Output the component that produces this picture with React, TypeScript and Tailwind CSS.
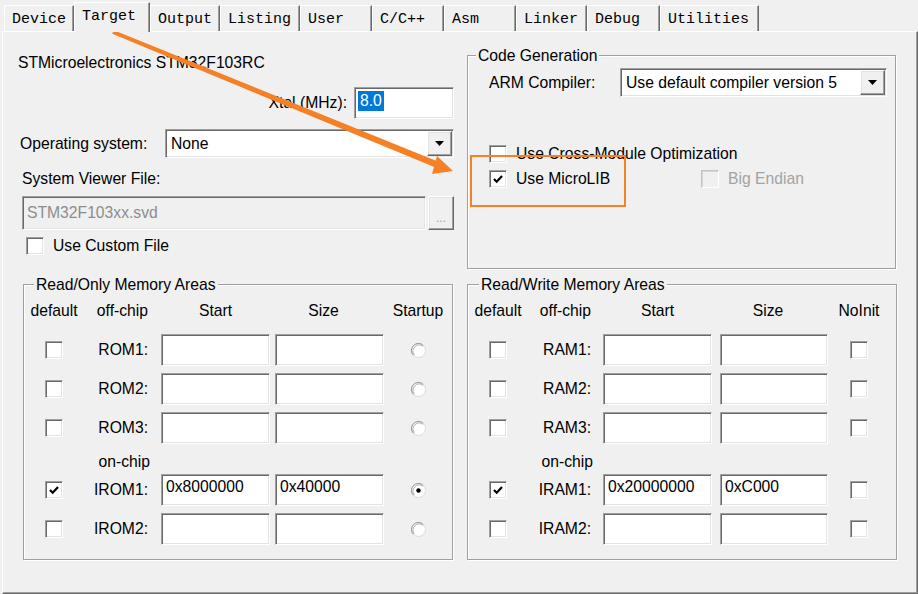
import React from 'react'

// classic win32 3d borders
const sunken =
  'border border-t-[#a0a0a0] border-l-[#a0a0a0] border-b-white border-r-white shadow-[inset_1px_1px_0_#696969,inset_-1px_-1px_0_#e3e3e3]'
const raised =
  'border border-t-white border-l-white border-b-[#696969] border-r-[#696969] shadow-[inset_-1px_-1px_0_#a0a0a0,inset_1px_1px_0_#e3e3e3]'
const etched = 'border border-[#a0a0a0] shadow-[1px_1px_0_#fff,inset_1px_1px_0_#fff]'

const TABS = [
  { label: 'Device', w: 'w-[70px]' },
  { label: 'Target', w: 'w-[76px]', active: true },
  { label: 'Output', w: 'w-[70px]' },
  { label: 'Listing', w: 'w-[80px]' },
  { label: 'User', w: 'w-[72px]' },
  { label: 'C/C++', w: 'w-[72px]' },
  { label: 'Asm', w: 'w-[72px]' },
  { label: 'Linker', w: 'w-[71px]' },
  { label: 'Debug', w: 'w-[73px]' },
  { label: 'Utilities', w: 'w-[99px]' },
]

type Row = { label?: string; checked?: boolean; start?: string; size?: string; on?: boolean; onchip?: boolean }

const RO_ROWS: Row[] = [
  { label: 'ROM1:' },
  { label: 'ROM2:' },
  { label: 'ROM3:' },
  { onchip: true },
  { label: 'IROM1:', checked: true, start: '0x8000000', size: '0x40000', on: true },
  { label: 'IROM2:' },
]

const RW_ROWS: Row[] = [
  { label: 'RAM1:' },
  { label: 'RAM2:' },
  { label: 'RAM3:' },
  { onchip: true },
  { label: 'IRAM1:', checked: true, start: '0x20000000', size: '0xC000' },
  { label: 'IRAM2:' },
]

function CheckBox({ checked = false, disabled = false }: { checked?: boolean; disabled?: boolean }) {
  return (
    <span
      className={`flex h-[18px] w-[18px] shrink-0 items-center justify-center border ${
        disabled
          ? 'border-t-[#c4c4c4] border-l-[#c4c4c4] border-b-white border-r-white bg-[#f0f0f0] shadow-[inset_1px_1px_0_#d6d6d6]'
          : 'border-t-[#a0a0a0] border-l-[#a0a0a0] border-b-white border-r-white bg-white shadow-[inset_1px_1px_0_#696969,inset_-1px_-1px_0_#e3e3e3]'
      }`}
    >
      {checked && (
        <svg width="12" height="12" viewBox="0 0 12 12">
          <path d="M2 6 L4.7 8.7 L10 3" fill="none" stroke="#000" strokeWidth="2.2" />
        </svg>
      )}
    </span>
  )
}

function Radio({ on = false }: { on?: boolean }) {
  return (
    <svg width="17" height="17" viewBox="0 0 17 17">
      <circle cx="8.5" cy="8.5" r="7" fill="#fff" />
      <path d="M3.55 13.45 A7 7 0 0 1 13.45 3.55" fill="none" stroke="#8a8a8a" />
      <path d="M13.45 3.55 A7 7 0 0 1 3.55 13.45" fill="none" stroke="#dcdcdc" />
      <path d="M4.3 12.7 A6 6 0 0 1 12.7 4.3" fill="none" stroke="#b0b0b0" />
      {on && <circle cx="8.5" cy="8.5" r="2.2" fill="#000" />}
    </svg>
  )
}

function Dropdown({ value, className }: { value: string; className: string }) {
  return (
    <div className={`flex h-[29px] items-stretch bg-white ${sunken} ${className}`}>
      <span className="flex flex-1 items-center pl-[5px]">{value}</span>
      <span className={`m-[1px] flex w-[25px] items-center justify-center bg-[#f0f0f0] ${raised}`}>
        <svg width="9" height="5" viewBox="0 0 9 5">
          <path d="M0 0H9L4.5 5Z" fill="#000" />
        </svg>
      </span>
    </div>
  )
}

type Cols = { c1: string; c2: string; in1: string; in2: string; c5: string }

function MemoryGroup(props: {
  title: string
  legend: string
  className: string
  cols: Cols
  rows: Row[]
  last: string
  radio?: boolean
}) {
  const { cols } = props
  return (
    <fieldset className={`h-[284px] ${etched} ${props.className}`}>
      <legend className={`bg-[#f0f0f0] px-[2px] leading-[17px] ${props.legend}`}>{props.title}</legend>
      <div className="pl-[2px]">
        <div className="mt-[7px] flex h-[22px] items-center">
          <span className={`${cols.c1} text-center`}>default</span>
          <span className={`${cols.c2} pr-[7px] text-right`}>off-chip</span>
          <span className={`${cols.in1} text-center`}>Start</span>
          <span className={`${cols.in2} pr-[12px] text-center`}>Size</span>
          <span className={`${cols.c5} text-center`}>{props.last}</span>
        </div>
        <div className="mt-[11px]">
          {props.rows.map((r, i) =>
            r.onchip ? (
              <div key={i} className="flex h-[23px] items-center">
                <span className={cols.c1} />
                <span className={`${cols.c2} pr-[5px] text-right`}>on-chip</span>
              </div>
            ) : (
              <div key={i} className="flex h-[39px] items-start pt-[1px]">
                <span className={`flex h-[32px] items-center justify-center ${cols.c1}`}>
                  <CheckBox checked={r.checked} />
                </span>
                <span className={`flex h-[32px] items-center justify-end pr-[7px] ${cols.c2}`}>{r.label}</span>
                <span className={`h-[32px] bg-white pl-[4px] pt-[3px] leading-[17px] ${sunken} ${cols.in1}`}>
                  {r.start}
                </span>
                <span className={`h-[32px] bg-white pl-[4px] pt-[3px] leading-[17px] ${sunken} ${cols.in2}`}>
                  {r.size}
                </span>
                <span className={`flex h-[32px] items-center justify-center ${cols.c5}`}>
                  {props.radio ? <Radio on={r.on} /> : <CheckBox />}
                </span>
              </div>
            ),
          )}
        </div>
      </div>
    </fieldset>
  )
}

export default function App() {
  return (
    <div className="relative h-[594px] w-[918px] overflow-hidden bg-[#f0f0f0] font-['Liberation_Sans',Arial,sans-serif] text-[15.7px] text-black">
      {/* tab strip */}
      <div className="flex h-[31px] items-end pl-[4px] font-['Liberation_Mono','DejaVu_Sans_Mono',monospace] text-[15px]">
        {TABS.map((t) => (
          <div
            key={t.label}
            className={`flex items-center border-l border-t border-r border-l-white border-t-white border-r-[#696969] pl-[7px] shadow-[inset_-1px_0_0_#a0a0a0] ${t.w} ${
              t.active ? 'relative z-10 -mb-px h-[30px] bg-[#f0f0f0]' : 'h-[26px] pt-[4px]'
            }`}
          >
            {t.label}
          </div>
        ))}
      </div>

      {/* tab page */}
      <div className="ml-[2px] h-[563px] w-[916px] border-l border-t border-r border-b border-l-white border-t-white border-r-[#696969] border-b-[#696969] shadow-[inset_-1px_-1px_0_#a0a0a0]">
        <div className="flex items-start">
          {/* device / os column */}
          <div className="ml-[15px] w-[436px]">
            <div className="mt-[22px] leading-[17px]">STMicroelectronics STM32F103RC</div>
            <div className="mt-[16px] flex h-[32px] items-center justify-end">
              <span className="mr-[7px]">Xtal (MHz):</span>
              <div className={`h-[32px] w-[100px] bg-white ${sunken}`}>
                <span className="ml-[3px] mt-[3px] inline-block bg-[#0078d7] px-[2px] leading-[20px] text-white">8.0</span>
              </div>
            </div>
            <div className="mt-[10px] flex items-center">
              <span className="ml-[2px]">Operating system:</span>
              <Dropdown value="None" className="ml-auto w-[289px]" />
            </div>
            <div className="ml-[4px] mt-[12px] leading-[17px]">System Viewer File:</div>
            <div className="mt-[9px] flex">
              <div className={`ml-[4px] flex h-[34px] w-[404px] items-center pl-[4px] text-[#8d8d8d] ${sunken}`}>
                STM32F103xx.svd
              </div>
              <div className={`ml-[2px] flex h-[34px] w-[26px] items-end justify-center pb-[5px] text-[12px] leading-none text-[#a0a0a0] ${raised}`}>
                ...
              </div>
            </div>
            <div className="ml-[8px] mt-[7px] flex items-center leading-[18px]">
              <CheckBox />
              <span className="ml-[9px]">Use Custom File</span>
            </div>
          </div>

          {/* code generation */}
          <fieldset className={`ml-[13px] mt-[15px] h-[222px] w-[429px] ${etched}`}>
            <legend className="ml-[8px] bg-[#f0f0f0] px-[2px] leading-[17px]">Code Generation</legend>
            <div className="mt-[4px] flex items-center">
              <span className="ml-[21px]">ARM Compiler:</span>
              <Dropdown value="Use default compiler version 5" className="ml-auto mr-[8px] w-[267px]" />
            </div>
            <div className="ml-[21px] mt-[48px] flex items-center leading-[18px]">
              <CheckBox />
              <span className="ml-[9px]">Use Cross-Module Optimization</span>
            </div>
            <div className="ml-[21px] mt-[7px] flex items-center leading-[18px]">
              <div className="flex w-[212px] items-center">
                <CheckBox checked />
                <span className="ml-[9px]">Use MicroLIB</span>
              </div>
              <CheckBox disabled />
              <span className="ml-[9px] text-[#a3a3a3]">Big Endian</span>
            </div>
          </fieldset>
        </div>

        <div className="mt-[7px] flex items-start">
          <MemoryGroup
            title="Read/Only Memory Areas"
            legend="ml-[10px]"
            className="ml-[20px] w-[429px]"
            cols={{ c1: 'w-[56px]', c2: 'w-[73px]', in1: 'ml-[6px] w-[109px]', in2: 'ml-[5px] w-[109px]', c5: 'w-[68px]' }}
            rows={RO_ROWS}
            last="Startup"
            radio
          />
          <MemoryGroup
            title="Read/Write Memory Areas"
            legend="ml-[11px]"
            className="ml-[14px] w-[430px]"
            cols={{ c1: 'w-[56px]', c2: 'w-[72px]', in1: 'ml-[5px] w-[109px]', in2: 'ml-[8px] w-[108px]', c5: 'w-[62px]' }}
            rows={RW_ROWS}
            last="NoInit"
          />
        </div>
      </div>

      {/* annotation overlay */}
      <div className="pointer-events-none absolute left-[470px] top-[155px] h-[52px] w-[156px] border-2 border-[#f58025]" />
      <svg className="pointer-events-none absolute left-0 top-0" width="918" height="594" viewBox="0 0 918 594">
        <polygon points="112.2,33.8 113.8,30.2 437.8,161.4 434.2,167.0" fill="#f58025" />
        <polygon points="453,171 437,156 432,174" fill="#f58025" />
      </svg>
    </div>
  )
}
